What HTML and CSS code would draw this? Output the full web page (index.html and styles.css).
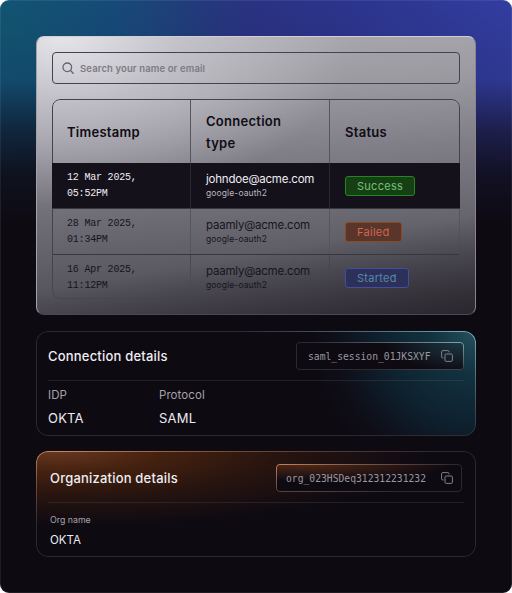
FILE: index.html
```html
<!DOCTYPE html>
<html lang="en">
<head>
  <meta charset="UTF-8">
  <title>Connections</title>
  <link rel="stylesheet" href="styles.css">
</head>
<body>
  <svg width="0" height="0" class="defs">
    <symbol id="copy" viewBox="0 0 12 12">
      <path d="M2.500 8H1.800A1.200 1.200 0 0 1 .6 6.800V1.800A1.200 1.200 0 0 1 1.800.6H6.800A1.200 1.200 0 0 1 8 1.800V2.300" />
      <rect x="4" y="4" width="7.400" height="7.400" rx="1.200" />
    </symbol>
  </svg>

  <main class="page">
    <section class="panel">
      <div class="search">
        <svg class="search-icon" viewBox="0 0 12 12"><circle cx="5.300" cy="5.300" r="4.300" /><path d="M8.500 8.500l2.700 2.700" /></svg>
        <span>Search your name or email</span>
      </div>

      <div class="table">
        <div class="row head">
          <div class="cell">Timestamp</div>
          <div class="cell">Connection<br>type</div>
          <div class="cell">Status</div>
        </div>
        <div class="row active">
          <div class="cell time">12 Mar 2025,<br>05:52PM</div>
          <div class="cell user"><b>johndoe@acme.com</b><small>google-oauth2</small></div>
          <div class="cell"><span class="badge success">Success</span></div>
        </div>
        <div class="row">
          <div class="cell time">28 Mar 2025,<br>01:34PM</div>
          <div class="cell user"><b>paamly@acme.com</b><small>google-oauth2</small></div>
          <div class="cell"><span class="badge failed">Failed</span></div>
        </div>
        <div class="row last">
          <div class="cell time">16 Apr 2025,<br>11:12PM</div>
          <div class="cell user"><b>paamly@acme.com</b><small>google-oauth2</small></div>
          <div class="cell"><span class="badge started">Started</span></div>
        </div>
      </div>
    </section>

    <section class="card connection">
      <div class="card-head">
        <h2>Connection details</h2>
        <div class="code"><span>saml_session_01JKSXYF</span><svg class="copy"><use href="#copy" /></svg></div>
      </div>
      <div class="fields">
        <div class="field"><label>IDP</label><p>OKTA</p></div>
        <div class="field"><label>Protocol</label><p>SAML</p></div>
      </div>
    </section>

    <section class="card organization">
      <div class="card-head">
        <h2>Organization details</h2>
        <div class="code"><span>org_023HSDeq312312231232</span><svg class="copy"><use href="#copy" /></svg></div>
      </div>
      <div class="fields">
        <div class="field"><label>Org name</label><p>OKTA</p></div>
      </div>
    </section>
  </main>
</body>
</html>
```

FILE: styles.css
```css
* { box-sizing: border-box; }
body { margin: 0; background: #fff; font-family: Inter, sans-serif; }
h2, p { margin: 0; }
.defs { position: absolute; }

.page {
  height: 593px;
  padding: 36px;
  border-radius: 9px;
  overflow: hidden;
  box-shadow: inset 0 0 0 1px rgba(255,255,255,.07);
  background:
    linear-gradient(180deg, transparent 0, rgba(14,10,18,.1) 80px, rgba(14,10,18,.58) 130px, rgba(14,10,18,.88) 175px, #0e0a12 225px),
    radial-gradient(ellipse 240px 300px at 10px 25px, #125472 0, rgba(18,80,118,.8) 35%, transparent 100%),
    linear-gradient(90deg, #18467c 0, #29327e 200px, #2b348a 330px, #323da0 512px);
}

.panel {
  height: 279px;
  padding: 15px;
  border: 1px solid;
  border-color: #d1ced6 #8b848d #4b4851 #a3a0a9;
  border-radius: 8px;
  background:
    linear-gradient(170deg, transparent 72%, rgba(34,31,38,.8) 100%),
    radial-gradient(ellipse 290px 170px at 6% 0, #e5e4e9 0, rgba(210,208,216,.65) 40%, transparent 100%),
    linear-gradient(176deg, #acabb1 0, #9b9aa0 22%, #7f7d86 44%, #66656e 68%, #54525b 85%, #46434c 100%);
  background-origin: border-box;
}
.search {
  display: flex;
  align-items: center;
  gap: 6px;
  height: 32px;
  padding-left: 9px;
  border: 1px solid #45424d;
  border-radius: 4px;
  color: #7d7b83;
  font-size: 9.500px;
  font-weight: 600;
  letter-spacing: .12px;
}
.search-icon { width: 12px; height: 12px; fill: none; stroke: #66636d; stroke-width: 1.300; stroke-linecap: round; }

.table {
  position: relative;
  height: 200px;
  margin-top: 15px;
  padding: 1px;
  border-radius: 8px;
}
/* outline fades out towards the bottom */
.table::before {
  content: "";
  position: absolute;
  inset: 0;
  border: 1px solid #45424c;
  border-radius: 8px;
  mask: linear-gradient(165deg, #000 55%, transparent 88%);
}
.row { position: relative; display: grid; grid-template-columns: 138px 139px 1fr; height: 46px; border-bottom: 1px solid #393640; }
.head { height: 63px; color: #0f0c14; font-size: 13px; font-weight: 600; line-height: 22px; letter-spacing: .27px; border-bottom: 0; }
.active { background: #14111a; margin: 0 -1px; padding: 0 1px; }
.last { height: 45px; border-bottom: 0; }
.cell { display: flex; flex-direction: column; justify-content: center; align-items: flex-start; padding-left: 14px; border-right: 1px solid #57545e; }
.cell + .cell { padding-left: 15px; }
.cell:last-child { border-right: 0; }
.active .cell { border-color: #2b2832; }
.last .cell { border-image: linear-gradient(#45424c, transparent 85%) 1; }
.time { font: 10px/16px "Liberation Mono", monospace; letter-spacing: -.2px; }
.row:not(.head) { color: #17141d; }
.row.active { color: #eeedf3; }
.user b { font-size: 11.500px; font-weight: 400; line-height: 16px; letter-spacing: -.22px; }
.user small { font-size: 8.500px; line-height: 13px; letter-spacing: .12px; }
.active small { color: #bab7c1; }
.badge { height: 20px; padding: 0 11px; border: 1px solid; border-radius: 3px; font-size: 11px; line-height: 18px; letter-spacing: .27px; }
.success { color: #76c079; background: #164014; border-color: #238624; }
.failed { color: #d46450; background: #593629; border-color: #8a4a25; }
.started { color: #5688ad; background: #2d3159; border-color: #414f9c; }

.card {
  position: relative;
  height: 105px;
  margin-top: 16px;
  padding: 11px 12px;
  border-radius: 12px;
}
/* gradient hairline following the rounded corners */
.card::before, .code::before {
  content: "";
  position: absolute;
  inset: 0;
  padding: 1px;
  border-radius: inherit;
  background: var(--edge);
  mask: linear-gradient(#000 0 0) content-box exclude, linear-gradient(#000 0 0);
}
.connection {
  --edge: radial-gradient(ellipse 240px 110px at 100% 0, #83adb8 0, #4d7280 40%, #2c2931 100%);
  background: radial-gradient(ellipse 165px 160px at 100% 0, #25505c 0, #12313f 28%, #0e202d 60%, #0e0f19 85%, #0e0a12 100%);
}
.organization {
  --edge: radial-gradient(ellipse 380px 75px at 5% 0, #c58661 0, #774b34 45%, #2c2931 100%);
  margin-top: 15px;
  height: 106px;
  background: radial-gradient(ellipse 370px 75px at 5% 0, #673721 0, #44210f 28%, #27140f 60%, #0e0a12 100%);
}
.card-head { display: flex; justify-content: space-between; height: 39px; border-bottom: 1px solid rgba(130,125,140,.18); }
h2 { color: #f0edf2; font-size: 13px; font-weight: 500; line-height: 29px; letter-spacing: .2px; }
.code {
  --edge: radial-gradient(ellipse 150px 35px at 100% 0, #84a2aa, #2c2931);
  position: relative;
  display: flex;
  align-items: center;
  justify-content: space-between;
  width: 168px;
  height: 28px;
  padding: 0 11px 0 12px;
  border-radius: 4px;
  color: #9a979f;
  font: 9.700px "DejaVu Sans Mono", monospace;
  background: radial-gradient(ellipse 80px 30px at 100% 0, #1b3a46, #0e0a12);
}
.copy { width: 12px; height: 12px; fill: none; stroke: #85828b; stroke-width: 1; }
.fields { display: flex; padding-top: 4px; }
.field { width: 111px; }
label { display: block; color: #a5a2ab; font-size: 11.500px; line-height: 21px; letter-spacing: .07px; }
.field p { color: #eceaf0; font-size: 13px; line-height: 24px; letter-spacing: .2px; }
.organization .card-head { height: 41px; padding: 2px 2px 0; }
.organization .code {
  --edge: radial-gradient(ellipse 180px 38px at 0 0, #c38158, #2c2931);
  width: 186px;
  padding: 0 9px 0 10px;
  background: radial-gradient(ellipse 150px 17px at 15% 0, #512917, #0e0a12);
}
.organization .fields { padding: 8px 2px 0; }
.organization label { font-size: 8.800px; line-height: 18px; letter-spacing: 0; }
.organization .field p { font-size: 11.500px; line-height: 22px; letter-spacing: 0; }
```
